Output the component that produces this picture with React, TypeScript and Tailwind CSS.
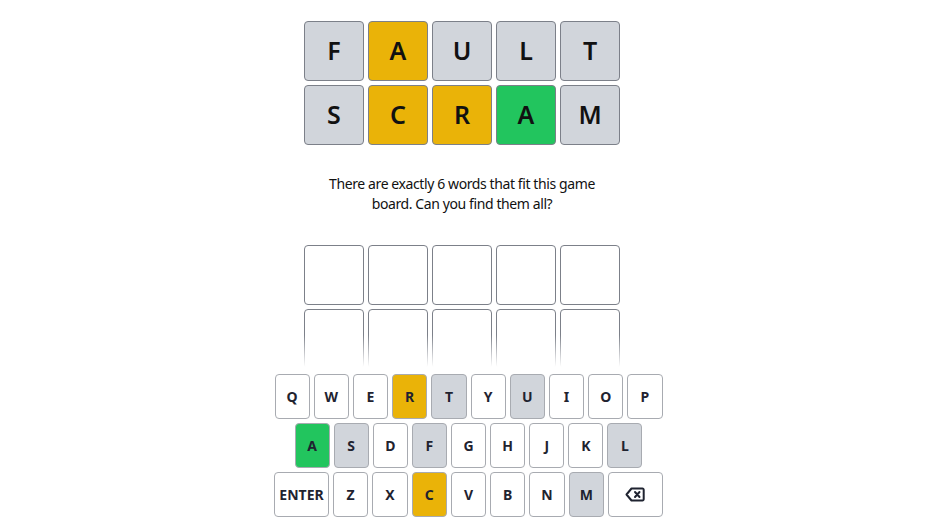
import React from "react";

type S = "g" | "y" | "x" | "e";

const tileCls: Record<S, string> = {
  g: "bg-[#22c55e]",
  y: "bg-[#eab308]",
  x: "bg-[#d1d5db]",
  e: "bg-white",
};

function Tile({ l, s }: { l?: string; s: S }) {
  return (
    <div
      className={`w-[60px] h-[60px] rounded-[4px] border border-[#7c8089] flex items-center justify-center text-[25px] font-semibold text-[#111] ${tileCls[s]}`}
    >
      {l}
    </div>
  );
}

const keyState: Record<string, S> = {
  R: "y",
  T: "x",
  U: "x",
  A: "g",
  S: "x",
  F: "x",
  L: "x",
  C: "y",
  M: "x",
};

function Key({ k, wide }: { k: React.ReactNode; wide?: boolean }) {
  const s = typeof k === "string" ? keyState[k] : undefined;
  const bg = s ? tileCls[s] : "bg-white";
  return (
    <div
      className={`${wide ? "w-[55px]" : "flex-1"} h-[45px] rounded-[4px] border border-[#a8abb1] flex items-center justify-center text-[14px] font-bold text-[#1f2330] ${bg}`}
    >
      {k}
    </div>
  );
}

function Backspace() {
  return (
    <svg width="20" height="15" viewBox="0 0 20 15" fill="none">
      <path
        d="M6.5 1.5h11a1.2 1.2 0 0 1 1.2 1.2v9.6a1.2 1.2 0 0 1-1.2 1.2h-11L1.5 7.5z"
        stroke="#1f2330"
        strokeWidth="2"
        strokeLinejoin="round"
      />
      <path d="M10 5l4.5 5M14.5 5L10 10" stroke="#1f2330" strokeWidth="2" strokeLinecap="round" />
    </svg>
  );
}

export default function App() {
  const rows: [string, S][][] = [
    [["F", "x"], ["A", "y"], ["U", "x"], ["L", "x"], ["T", "x"]],
    [["S", "x"], ["C", "y"], ["R", "y"], ["A", "g"], ["M", "x"]],
  ];
  return (
    <div
      className="h-screen w-full bg-white flex flex-col overflow-hidden"
      style={{ fontFamily: '"Noto Sans", "Open Sans", sans-serif' }}
    >
      <div className="flex-1 relative overflow-hidden">
        <div className="flex flex-col items-center pt-[21px] pr-[4px]">
          <div className="flex flex-col gap-[4px]">
            {rows.map((r, i) => (
              <div key={i} className="flex gap-[4px]">
                {r.map(([l, s], j) => (
                  <Tile key={j} l={l} s={s} />
                ))}
              </div>
            ))}
          </div>
          <p className="mt-[29px] text-[14px] leading-[20px] tracking-[-0.4px] text-[#111] text-center">
            There are exactly 6 words that fit this game
            <br />
            board. Can you find them all?
          </p>
          <div className="mt-[31px] flex flex-col gap-[4px]">
            {[0, 1, 2].map((i) => (
              <div key={i} className="flex gap-[4px]">
                {[0, 1, 2, 3, 4].map((j) => (
                  <Tile key={j} s="e" />
                ))}
              </div>
            ))}
          </div>
        </div>
        <div className="absolute bottom-0 left-0 right-0 h-[32px] bg-gradient-to-b from-white/0 to-white" />
      </div>
      <div className="flex flex-col items-center gap-[4px] pt-[7px] pb-[5px] pl-[9px]">
        <div className="flex gap-[4px] w-[388px]">
          {"QWERTYUIOP".split("").map((k) => (
            <Key key={k} k={k} />
          ))}
        </div>
        <div className="flex gap-[4px] w-[348px]">
          {"ASDFGHJKL".split("").map((k) => (
            <Key key={k} k={k} />
          ))}
        </div>
        <div className="flex gap-[4px] w-[389px]">
          <Key k="ENTER" wide />
          {"ZXCVBNM".split("").map((k) => (
            <Key key={k} k={k} />
          ))}
          <Key k={<Backspace />} wide />
        </div>
      </div>
    </div>
  );
}
